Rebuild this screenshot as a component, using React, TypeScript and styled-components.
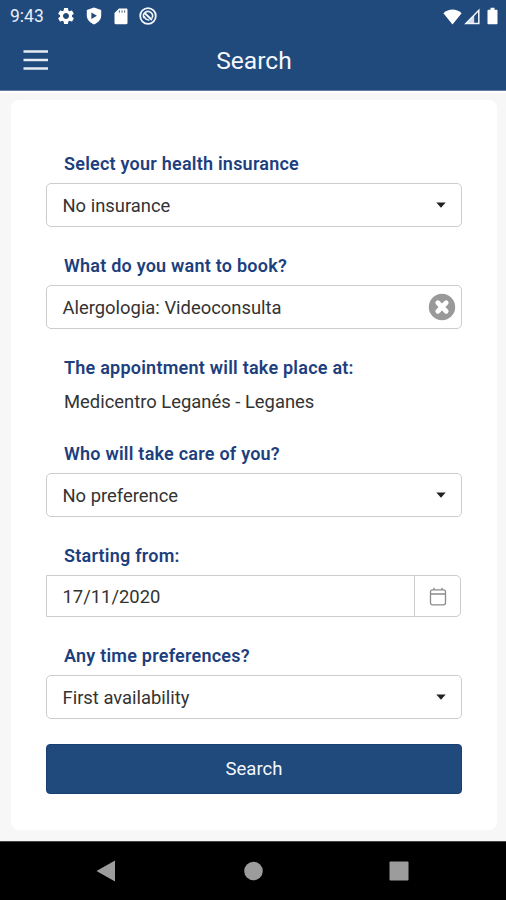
import React from 'react';
import styled, { createGlobalStyle } from 'styled-components';

const BLUE = '#20497c';
const LINE = '#cccccc';

const GlobalStyle = createGlobalStyle`
  * { box-sizing: border-box; }
  body { margin: 0; background: #f7f7f7; }
`;

const Screen = styled.div`
  width: 506px;
  height: 900px;
  display: flex;
  flex-direction: column;
  overflow: hidden;
  background: #f7f7f7;
  font-family: Roboto, "Liberation Sans", sans-serif;
  color: #333;
`;

const Top = styled.header`
  height: 91px;
  flex: none;
  background: ${BLUE};
  border-bottom: 1px solid #647fa3;
  color: #fff;
`;

const StatusBar = styled.div`
  height: 32px;
  display: flex;
  align-items: center;
  justify-content: space-between;
  padding: 0 7px 0 10px;
`;

const StatusGroup = styled.div<{ $gap: number }>`
  display: flex;
  align-items: center;
  gap: ${(p) => p.$gap}px;
`;

const Clock = styled.span`
  width: 37px;
  font-size: 17.5px;
  line-height: 32px;
  white-space: nowrap;
  color: #e9eef5;
`;

const TitleBar = styled.div`
  height: 58px;
  display: grid;
  grid-template-columns: 60px 1fr 60px;
  align-items: center;
  padding: 0 0 1px 0;
`;

const MenuButton = styled.button`
  display: flex;
  padding: 0 0 2px 23px;
  border: 0;
  background: none;
  color: #fff;
`;

const Title = styled.h1`
  margin: 0;
  text-align: center;
  font-size: 24.6px;
  line-height: 30px;
  font-weight: 400;
  padding-left: 2px;
  color: #f4f7fb;
`;

const Main = styled.main`
  flex: 1;
  padding: 9px 9px 11px 11px;
  background: linear-gradient(#fff 0 2px, #f7f7f7 2px);
`;

const Card = styled.form`
  height: 730px;
  padding: 52px 35px 37px;
  border-radius: 8px;
  background: #fff;
  display: flex;
  flex-direction: column;
`;

const Group = styled.div`
  margin-bottom: 27px;
  &:last-of-type { margin-bottom: 25px; }
`;

const Label = styled.div`
  height: 24px;
  margin-bottom: 7px;
  padding-left: 18px;
  font-size: 18px;
  line-height: 24px;
  font-weight: 600;
  letter-spacing: 0.23px;
  white-space: nowrap;
  color: #1d3f7e;
`;

const StaticValue = styled.div`
  height: 28px;
  padding: 1px 0 0 18px;
  font-size: 18.4px;
  line-height: 28px;
  white-space: nowrap;
`;

const Box = styled.div<{ $height?: number; $square?: boolean }>`
  height: ${(p) => p.$height ?? 44}px;
  width: ${(p) => (p.$square ? 415 : 416)}px;
  display: flex;
  align-items: center;
  justify-content: space-between;
  padding: 0 0 0 15.5px;
  border: 1.5px solid ${LINE};
  border-radius: ${(p) => (p.$square ? '0 5px 5px 0' : '5px')};
  font-size: 18.4px;
  background: #fff;
`;

const Value = styled.span`
  white-space: nowrap;
`;

const Trailing = styled.span<{ $right: number }>`
  display: flex;
  margin-right: ${(p) => p.$right}px;
`;

const DateButton = styled.span`
  width: 46px;
  align-self: stretch;
  display: flex;
  align-items: center;
  justify-content: center;
  border-left: 1px solid ${LINE};
`;

const Submit = styled.button`
  width: 416px;
  height: 50px;
  flex: none;
  border: 1px solid #163f74;
  border-radius: 4px;
  background: ${BLUE};
  color: #f4f7fb;
  font: 400 18.5px/46px Roboto, "Liberation Sans", sans-serif;
  padding: 0;
`;

const NavBar = styled.nav`
  height: 59px;
  flex: none;
  display: flex;
  align-items: center;
  justify-content: space-between;
  padding: 0 97px 0 96px;
  background: #000;
  border-top: 1px solid #444;
`;

const Caret = () => (
  <svg width="10" height="6" viewBox="0 0 10 6"><path d="M0.3 0.4h9.4L5 5.7z" fill="#222" /></svg>
);

const Select = ({ value }: { value: string }) => (
  <Box>
    <Value>{value}</Value>
    <Trailing $right={15}><Caret /></Trailing>
  </Box>
);

const Gear = () => (
  <svg width="20" height="20" viewBox="0 0 24 24" fill="#fff">
    <path d="M19.14 12.94c.04-.3.06-.61.06-.94 0-.32-.02-.64-.07-.94l2.03-1.58c.18-.14.23-.41.12-.61l-1.92-3.32c-.12-.22-.37-.29-.59-.22l-2.39.96c-.5-.38-1.03-.7-1.62-.94l-.36-2.54c-.04-.24-.24-.41-.48-.41h-3.84c-.24 0-.43.17-.47.41l-.36 2.54c-.59.24-1.13.57-1.62.94l-2.39-.96c-.22-.08-.47 0-.59.22L2.74 8.87c-.12.21-.08.47.12.61l2.03 1.58c-.05.3-.09.63-.09.94s.02.64.07.94l-2.03 1.58c-.18.14-.23.41-.12.61l1.92 3.32c.12.22.37.29.59.22l2.39-.96c.5.38 1.03.7 1.62.94l.36 2.54c.05.24.24.41.48.41h3.84c.24 0 .44-.17.47-.41l.36-2.54c.59-.24 1.13-.56 1.62-.94l2.39.96c.22.08.47 0 .59-.22l1.92-3.32c.12-.22.07-.47-.12-.61l-2.01-1.58zM12 15.6c-1.98 0-3.6-1.62-3.6-3.6s1.62-3.6 3.6-3.6 3.6 1.62 3.6 3.6-1.62 3.6-3.6 3.6z" />
  </svg>
);

const Shield = () => (
  <svg width="16" height="18" viewBox="0 0 16 18">
    <path d="M8 .5 15.2 3v5.6c0 4-3 7.2-7.2 8.9C3.8 15.8.8 12.6.8 8.6V3z" fill="#fff" />
    <path d="M5.4 5.6v6.4l5.5-3.2z" fill={BLUE} />
  </svg>
);

const SdCard = () => (
  <svg width="14" height="17" viewBox="0 0 14 17">
    <path d="M5 .5h7.3c.7 0 1.2.5 1.2 1.2v13.4c0 .7-.5 1.2-1.2 1.2H1.7c-.7 0-1.2-.5-1.2-1.2V5z" fill="#fff" />
    <path d="M5.4 2.3v2.4M8 2.3v2.4M10.6 2.3v2.4" stroke={BLUE} strokeWidth="1.1" opacity=".7" />
  </svg>
);

const Radar = () => (
  <svg width="18" height="18" viewBox="0 0 18 18" fill="none" stroke="#f2f6fb">
    <circle cx="9" cy="9" r="7.8" strokeWidth="1.8" />
    <path d="M5.1 11.2A4.5 4.5 0 1 1 12.8 11.4" strokeWidth="1.6" />
    <path d="M5.3 5.8 12.9 13" strokeWidth="2" />
    <path d="M5.2 9.2C5.8 12 8 13 10.3 12.9" strokeWidth="1.5" />
  </svg>
);

const fields = {
  insurance: 'No insurance',
  service: 'Alergologia: Videoconsulta',
  place: 'Medicentro Leganés - Leganes',
  doctor: 'No preference',
  date: '17/11/2020',
  time: 'First availability',
};

export default function App() {
  return (
    <>
      <GlobalStyle />
      <Screen>
        <Top>
          <StatusBar>
            <StatusGroup $gap={9}>
              <Clock>9:43</Clock>
              <StatusGroup $gap={12}>
                <StatusGroup $gap={9.5}>
                  <Gear />
                  <Shield />
                </StatusGroup>
                <StatusGroup $gap={11}>
                  <SdCard />
                  <Radar />
                </StatusGroup>
              </StatusGroup>
            </StatusGroup>
            <StatusGroup $gap={2}>
              <svg width="19" height="17" viewBox="0 0 19 17"><path d="M.4 5.2C5.5.2 13.5.2 18.6 5.2L9.5 16.4z" fill="#fff" /></svg>
              <svg width="17" height="17" viewBox="0 0 17 17"><path d="M1.9 15.5 14.8 2.3V15.5z" fill="none" stroke="#f4f7fb" strokeWidth="1.5" /><path d="M2 15.5 10.2 7.2v8.3z" fill="#f4f7fb" opacity=".85" /></svg>
              <svg width="16" height="18" viewBox="1 0 16 18"><path d="M8.5 .8h4v1.9h2c.6 0 1 .4 1 1v12.5c0 .6-.4 1-1 1h-8c-.6 0-1-.4-1-1V3.7c0-.6.4-1 1-1h2z" fill="#fff" /></svg>
            </StatusGroup>
          </StatusBar>
          <TitleBar>
            <MenuButton type="button" aria-label="Menu">
              <svg width="26" height="22" viewBox="0 0 26 22"><path d="M.5 2.5h24.5M.5 11h24.5M.5 19.5h24.5" stroke="#e6ecf4" strokeWidth="2.4" /></svg>
            </MenuButton>
            <Title>Search</Title>
          </TitleBar>
        </Top>
        <Main>
          <Card>
            <Group>
              <Label>Select your health insurance</Label>
              <Select value={fields.insurance} />
            </Group>
            <Group>
              <Label>What do you want to book?</Label>
              <Box>
                <Value>{fields.service}</Value>
                <Trailing $right={5}>
                  <svg width="28" height="28" viewBox="0 0 28 28">
                    <circle cx="14" cy="14" r="13.2" fill="#999" />
                    <path d="M9.8 9.8 18.2 18.2M18.2 9.8 9.8 18.2" stroke="#fff" strokeWidth="4.8" strokeLinecap="round" />
                  </svg>
                </Trailing>
              </Box>
            </Group>
            <Group>
              <Label>The appointment will take place at:</Label>
              <StaticValue>{fields.place}</StaticValue>
            </Group>
            <Group>
              <Label>Who will take care of you?</Label>
              <Select value={fields.doctor} />
            </Group>
            <Group>
              <Label>Starting from:</Label>
              <Box $height={42} $square>
                <Value>{fields.date}</Value>
                <DateButton>
                  <svg width="18" height="19" viewBox="0 0 18 19" fill="none" stroke="#8b8b8b" strokeWidth="1.3">
                    <rect x="1.5" y="2.8" width="15" height="15" rx="2" />
                    <path d="M1.5 7h15M5 .7v2.2M13 .7v2.2" />
                  </svg>
                </DateButton>
              </Box>
            </Group>
            <Group>
              <Label>Any time preferences?</Label>
              <Select value={fields.time} />
            </Group>
            <Submit type="button">Search</Submit>
          </Card>
        </Main>
        <NavBar>
          <svg width="20" height="22" viewBox="0 0 20 22"><path d="M.5 11 19 .5v21z" fill="#9c9c9c" /></svg>
          <svg width="20" height="20" viewBox="0 0 20 20"><circle cx="10.5" cy="10" r="9.3" fill="#9c9c9c" /></svg>
          <svg width="20" height="20" viewBox="0 0 20 20"><rect x=".5" y=".5" width="19" height="19" rx="1" fill="#9c9c9c" /></svg>
        </NavBar>
      </Screen>
    </>
  );
}
